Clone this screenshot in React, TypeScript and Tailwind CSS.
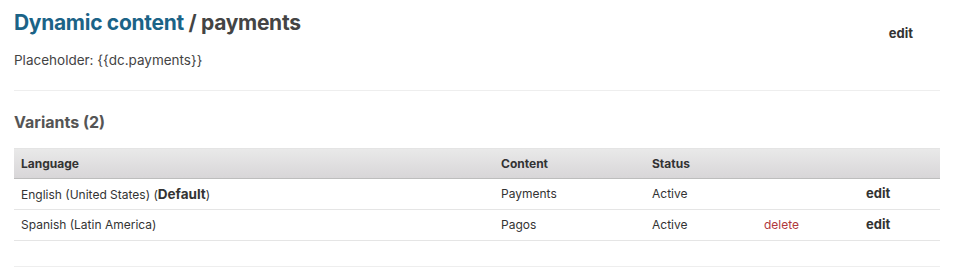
const rows = [
  { lang: 'English (United States)', isDefault: true, content: 'Payments', status: 'Active', canDelete: false },
  { lang: 'Spanish (Latin America)', isDefault: false, content: 'Pagos', status: 'Active', canDelete: true },
];

const cols = 'grid grid-cols-[480px_151px_112px_102px_1fr] items-center';

export default function App() {
  return (
    <div className="min-h-[273px] bg-white px-[14px] font-['Inter',_'Liberation_Sans',_sans-serif] text-[#444]">
      {/* page header */}
      <div className="flex items-start justify-between border-b border-[#eeeeee] pb-[20px]">
        <div>
          <h1 className="pt-[9px] text-[21px] font-bold leading-[28px] tracking-[-0.3px]">
            <a className="text-[#1b6387]">Dynamic content</a>
            <span className="text-[#444]"> / payments</span>
          </h1>
          <p className="mt-[13px] text-[13.5px] leading-[20px]">Placeholder: {'{{dc.payments}}'}</p>
        </div>
        <a className="mr-[27px] mt-[24px] text-[13px] font-bold leading-[18px] text-[#333]">edit</a>
      </div>

      {/* variants */}
      <h2 className="mt-[20px] text-[16px] font-bold leading-[22px] text-[#555]">Variants (2)</h2>

      <div className="mt-[15px] border-b border-[#eeeeee] pb-[25px]">
        <div
          className={`${cols} h-[31px] border-y border-t-[#e4e4e4] border-b-[#bdbdbd] bg-gradient-to-b from-[#e9e9e9] to-[#d8d6d8] px-[7px] text-[12px] font-bold text-[#333]`}
        >
          <span>Language</span>
          <span>Content</span>
          <span>Status</span>
          <span />
          <span />
        </div>
        {rows.map((r) => (
          <div key={r.lang} className={`${cols} h-[31px] border-b border-[#e5e5e5] px-[7px] text-[12px] text-[#333]`}>
            <span>
              {r.lang}
              {r.isDefault && (
                <>
                  {' '}(<b className="text-[13.5px] text-[#333]">Default</b>)
                </>
              )}
            </span>
            <span>{r.content}</span>
            <span>{r.status}</span>
            <span>{r.canDelete && <a className="text-[#b0383c]">delete</a>}</span>
            <span className="text-[13px] font-bold">edit</span>
          </div>
        ))}
      </div>
    </div>
  );
}
